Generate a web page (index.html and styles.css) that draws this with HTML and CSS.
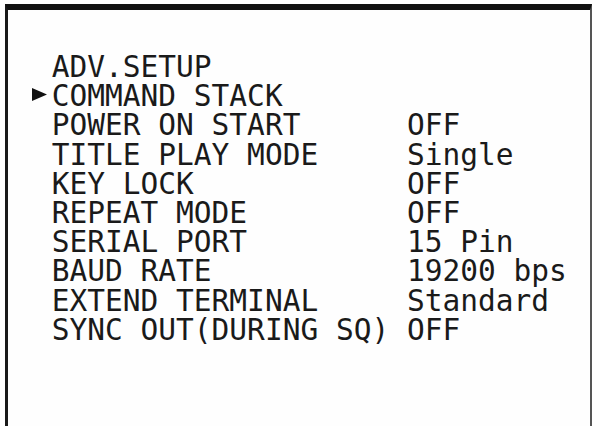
FILE: index.html
```html
<!DOCTYPE html>
<html lang="en">

<head>
    <meta charset="UTF-8">
    <meta name="viewport" content="width=device-width, initial-scale=1.0">
    <title>ADV.SETUP</title>
    <link rel="stylesheet" href="styles.css">
</head>

<body>
    <!-- on-screen menu -->
    <div class="screen">
        <div class="menu">
            <span class="mark"></span><span class="label">ADV.SETUP</span><span class="value"></span>
            <span class="mark"><svg class="cursor" width="15" height="13" viewBox="0 0 15 13"><path d="M0 0 L15 6.5 L0 13 Z" fill="#111"/></svg></span><span class="label">COMMAND STACK</span><span class="value"></span>
            <span class="mark"></span><span class="label">POWER ON START</span><span class="value">OFF</span>
            <span class="mark"></span><span class="label">TITLE PLAY MODE</span><span class="value">Single</span>
            <span class="mark"></span><span class="label">KEY LOCK</span><span class="value">OFF</span>
            <span class="mark"></span><span class="label">REPEAT MODE</span><span class="value">OFF</span>
            <span class="mark"></span><span class="label">SERIAL PORT</span><span class="value">15 Pin</span>
            <span class="mark"></span><span class="label">BAUD RATE</span><span class="value">19200 bps</span>
            <span class="mark"></span><span class="label">EXTEND TERMINAL</span><span class="value">Standard</span>
            <span class="mark"></span><span class="label">SYNC OUT(DURING SQ)</span><span class="value">OFF</span>
        </div>
    </div>
</body>

</html>
```

FILE: styles.css
```css
* {
    margin: 0;
    padding: 0;
    box-sizing: border-box;
}

body {
    width: 593px;
    height: 426px;
    overflow: hidden;
    background-color: #ffffff;
    padding: 4px 1px 0 5px;
}

.screen {
    height: 430px;
    border-top: 6px solid #111111;
    border-left: 3px solid #1a1a1a;
    border-right: 2px solid #555555;
    background-color: #fefefe;
    padding: 43px 0 0 26px;
}

.menu {
    display: grid;
    grid-template-columns: 1ch 20ch auto;
    font-family: "DejaVu Sans Mono", monospace;
    font-size: 29.5px;
    line-height: 29.2px;
    color: #1a1a1a;
}

.mark {
    display: flex;
    align-items: flex-start;
}

.cursor {
    margin: 6px 0 0 -2px;
}
```
